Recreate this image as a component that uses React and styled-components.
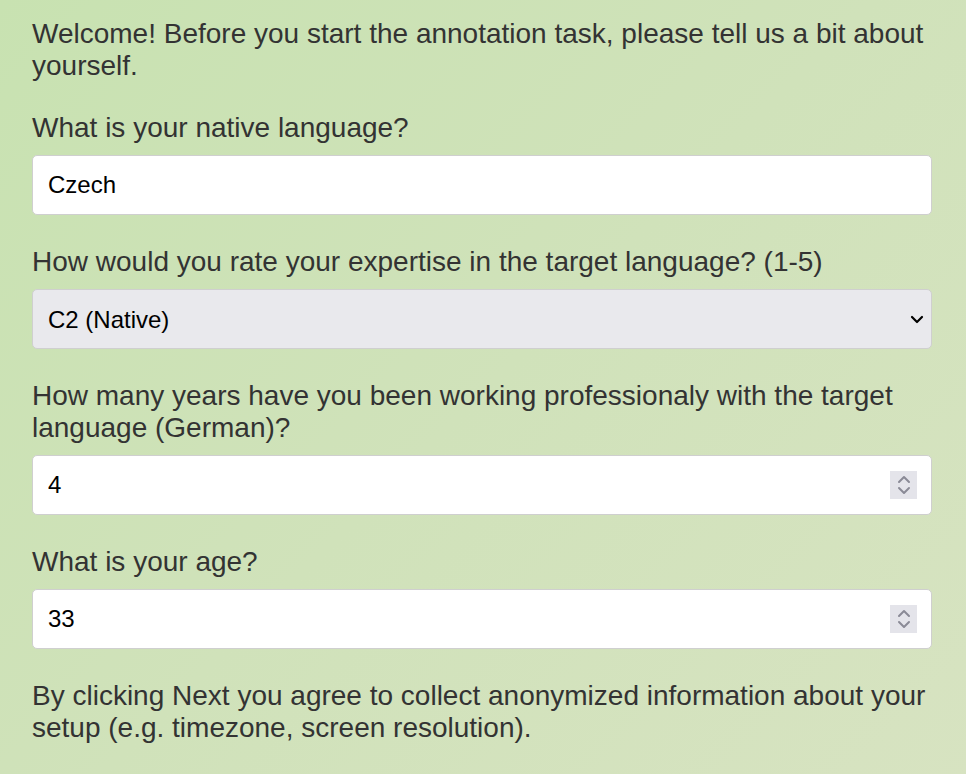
import React, {useState} from "react"
import styled, {createGlobalStyle} from "styled-components"

const GlobalStyle = createGlobalStyle`
    html, body {
        margin: 0;
        padding: 0;
        min-height: 100%;
    }
    body {
        background: linear-gradient(135deg, #c8e2b1 0%, #d0e2ba 50%, #d7e3c1 100%);
        min-height: 774px;
        font-family: "Liberation Sans", Arial, sans-serif;
    }
`

const Page = styled.div`
    padding: 18px 34px 40px 32px;
    color: #333333;
`

const Intro = styled.p`
    margin: 0 0 30px;
    font-size: 28px;
    line-height: 32px;
`

const Field = styled.div`
    display: flex;
    flex-direction: column;
    gap: 11px;
    margin-bottom: 31px;
`

const Label = styled.label`
    font-size: 28px;
    line-height: 32px;
`

const InputWrap = styled.div`
    position: relative;
`

const TextInput = styled.input`
    box-sizing: border-box;
    width: 100%;
    height: 60px;
    padding: 0 15px;
    border: 1px solid #cfcfcf;
    border-radius: 5px;
    background: #ffffff;
    font-family: "Liberation Sans", Arial, sans-serif;
    font-size: 24px;
    color: #000000;
    outline: none;
    appearance: textfield;
    -moz-appearance: textfield;

    &::-webkit-inner-spin-button,
    &::-webkit-outer-spin-button {
        -webkit-appearance: none;
        margin: 0;
    }
`

const Select = styled.select`
    box-sizing: border-box;
    width: 100%;
    height: 60px;
    padding: 0 15px;
    border: 1px solid #cfcfcf;
    border-radius: 5px;
    background: #e9e9ed;
    font-family: "Liberation Sans", Arial, sans-serif;
    font-size: 24px;
    color: #000000;
    appearance: none;
    -webkit-appearance: none;
    outline: none;
`

const Chevron = styled.svg`
    position: absolute;
    right: 8px;
    top: 50%;
    transform: translateY(-50%);
    pointer-events: none;
`

const Spinner = styled.div`
    position: absolute;
    right: 15px;
    top: 50%;
    transform: translateY(-50%);
    width: 27px;
    height: 28px;
    background: #e4e4ea;
    display: flex;
    align-items: center;
    justify-content: center;
    pointer-events: none;
`

const Note = styled.p`
    margin: 0;
    font-size: 28px;
    line-height: 32px;
`

const SpinIcon = () => (
    <svg width="16" height="24" viewBox="0 0 16 24" fill="none">
        <path d="M3 9 L8 4 L13 9" stroke="#8a8a96" strokeWidth="2" strokeLinecap="round" strokeLinejoin="round"/>
        <path d="M3 15 L8 20 L13 15" stroke="#8a8a96" strokeWidth="2" strokeLinecap="round" strokeLinejoin="round"/>
    </svg>
)

const NumberField = ({label, value, onChange}) => (
    <Field>
        <Label>{label}</Label>
        <InputWrap>
            <TextInput type="number" value={value} onChange={e => onChange(e.target.value)}/>
            <Spinner><SpinIcon/></Spinner>
        </InputWrap>
    </Field>
)

const App = () => {
    const [language, setLanguage] = useState("Czech")
    const [level, setLevel] = useState("C2")
    const [years, setYears] = useState("4")
    const [age, setAge] = useState("33")

    return (
        <Page>
            <GlobalStyle/>
            <Intro>Welcome! Before you start the annotation task, please tell us a bit about yourself.</Intro>

            <Field>
                <Label>What is your native language?</Label>
                <TextInput type="text" value={language} onChange={e => setLanguage(e.target.value)}/>
            </Field>

            <Field>
                <Label>How would you rate your expertise in the target language? (1-5)</Label>
                <InputWrap>
                    <Select value={level} onChange={e => setLevel(e.target.value)}>
                        <option value="A1">A1</option>
                        <option value="A2">A2</option>
                        <option value="B1">B1</option>
                        <option value="B2">B2</option>
                        <option value="C1">C1</option>
                        <option value="C2">C2 (Native)</option>
                    </Select>
                    <Chevron width="14" height="10" viewBox="0 0 14 10">
                        <path d="M2 3 L7 8 L12 3" stroke="#000" strokeWidth="2.2" fill="none" strokeLinecap="round" strokeLinejoin="round"/>
                    </Chevron>
                </InputWrap>
            </Field>

            <NumberField
                label="How many years have you been working professionaly with the target language (German)?"
                value={years}
                onChange={setYears}
            />

            <NumberField label="What is your age?" value={age} onChange={setAge}/>

            <Note>By clicking Next you agree to collect anonymized information about your setup (e.g. timezone, screen resolution).</Note>
        </Page>
    )
}

export default App
